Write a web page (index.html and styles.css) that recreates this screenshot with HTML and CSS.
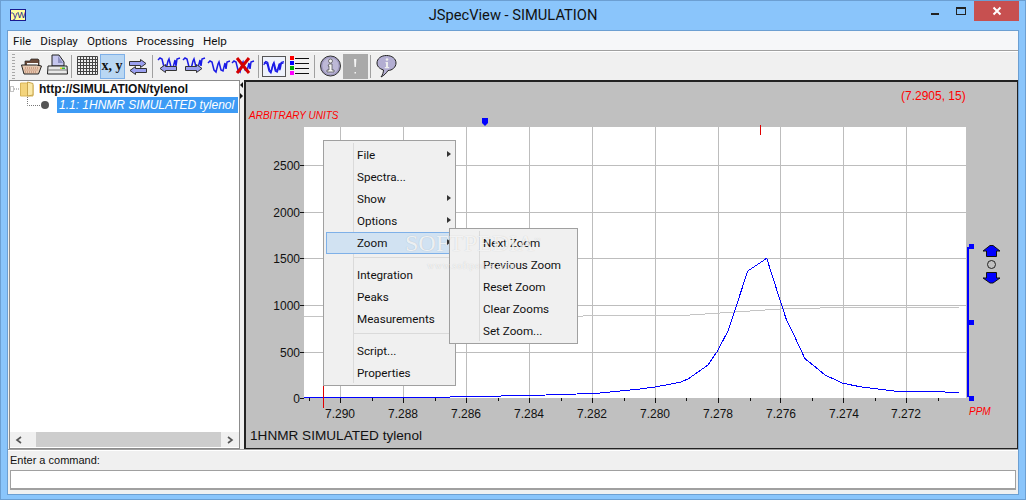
FILE: index.html
```html
<!DOCTYPE html>
<html lang="en">
<head>
    <meta charset="UTF-8">
    <title>JSpecView - SIMULATION</title>
    <link rel="stylesheet" href="styles.css">
</head>
<body>
    <div class="titlebar">
        <div class="app-icon">'yW</div>
        <div class="title">JSpecView - SIMULATION</div>
        <div class="controls">
            <span class="ctl-min"></span>
            <span class="ctl-max"></span>
            <span class="ctl-close">
                <svg width="10" height="10" viewBox="0 0 10 10"><path d="M1.5 1.5l7 7M8.5 1.5l-7 7" stroke="#fff" stroke-width="2"/></svg>
            </span>
        </div>
    </div>

    <div class="content">
        <div class="menubar">
            <span>File</span><span>Display</span><span>Options</span><span>Processing</span><span>Help</span>
        </div>

        <div class="toolbar">
            <div class="grip"></div>
            <!-- file -->
            <div class="tool">
                <svg viewBox="0 0 25 26"><path d="M6 10V8h5l1-2h7l1 1v6H6z" fill="#6b4a3a" stroke="#222" stroke-width=".7"/><path d="M8 10h11v3H8z" fill="#fff"/><path d="M2.5 12h15l5 1-3 8H5z" fill="#e6c8b0" stroke="#222"/><path d="M6 15h13M5.5 17h13M6 19h12" stroke="#b5785f" stroke-dasharray="1 1"/></svg>
            </div>
            <div class="tool">
                <svg viewBox="0 0 25 26"><path d="M8 2h7l5 7v4H8z" fill="#c5c6ee" stroke="#222"/><path d="M14 3l5 7h-5z" fill="#8e90c0"/><path d="M4 13h19l.5 8H3.500z" fill="#e8e8e8" stroke="#222"/><path d="M4 17h19" stroke="#777"/><path d="M16 14.500h2v1.500h-2z" fill="#e8d820"/><path d="M18 14.500h3v1.500h-3z" fill="#3ab53a"/></svg>
            </div>
            <div class="sep"></div>
            <!-- view -->
            <div class="tool">
                <svg viewBox="0 0 25 26"><path d="M2.500 3.500h20v18h-20zM2.500 6.500h20M2.500 9.500h20M2.500 12.500h20M2.500 15.500h20M2.500 18.500h20M5.500 3.500v18M8.500 3.500v18M11.500 3.500v18M14.500 3.500v18M17.500 3.500v18M20.500 3.500v18" fill="#eee" stroke="#444"/></svg>
            </div>
            <div class="tool tool-on xy">x, y</div>
            <div class="tool">
                <svg viewBox="0 0 25 26"><use href="#arrow-r" x="4" y="6"/><use href="#arrow-l" x="4" y="13"/></svg>
            </div>
            <div class="sep"></div>
            <!-- spectrum -->
            <div class="tool">
                <svg viewBox="0 0 25 26"><use href="#spec" x="2" y="3"/><use href="#arrow-l" x="3" y="11"/></svg>
            </div>
            <div class="tool">
                <svg viewBox="0 0 25 26"><use href="#spec" x="2" y="3"/><use href="#arrow-r" x="4" y="11"/></svg>
            </div>
            <div class="tool">
                <svg viewBox="0 0 25 26"><use href="#spec" x="2" y="6"/></svg>
            </div>
            <div class="tool">
                <svg viewBox="0 0 25 26"><use href="#spec" x="1" y="6"/><path d="M6 5l12 15M18 5L6 20" stroke="#d40000" stroke-width="3"/></svg>
            </div>
            <div class="sep"></div>
            <div class="tool tool-box">
                <svg viewBox="0 0 24 21"><use href="#spec" x="0.500" y="4.500"/><use href="#spec" x="1" y="3"/></svg>
            </div>
            <div class="tool">
                <svg viewBox="0 0 25 26"><path d="M3 3h4v4H3z" fill="#f00"/><path d="M3 8h4v4H3z" fill="#00f"/><path d="M3 13h4v4H3z" fill="#0a0"/><path d="M3 18h4v4H3z" fill="#f0f"/><path d="M8 5.500h14M8 10.500h14M8 15.500h14M8 20.500h14" stroke="#111"/></svg>
            </div>
            <div class="sep"></div>
            <!-- info -->
            <div class="tool">
                <svg viewBox="0 0 25 26"><circle cx="12.500" cy="13" r="10" fill="#a09ac0" stroke="#333"/><circle cx="12.500" cy="13" r="8" fill="#bdb8d6"/><circle cx="12.500" cy="8" r="2" fill="#f4f4f4" stroke="#333" stroke-width=".6"/><path d="M11 11h3v6h2v2H9v-2h2v-4h-1z" fill="#f4f4f4" stroke="#333" stroke-width=".6"/></svg>
            </div>
            <div class="tool tool-gray">
                <svg viewBox="0 0 25 26"><path d="M11 6h2.400l-.5 8h-1.400z" fill="#f4f4f4"/><path d="M11.500 19h1.500v1.500h-1.500z" fill="#f4f4f4"/></svg>
            </div>
            <div class="sep"></div>
            <div class="tool">
                <svg viewBox="0 0 25 26"><path d="M12.500 2.500c5.500 0 9.500 3.200 9.500 7.500s-4 7.500-8 7.500c-1.500 2.500-4 5-7 6.500 1.500-2 2.500-4.500 2.500-7C5 15.500 3 13 3 10c0-4.300 4-7.500 9.500-7.500z" fill="#b3aed2" stroke="#222"/><circle cx="13" cy="6.500" r="1.300" fill="#eee"/><path d="M11.500 9h2.500v5h1.200v1.200h-4.400V14h1.200v-3.800h-.5z" fill="#eee"/></svg>
            </div>
        </div>

        <div class="main">
            <div class="tree">
                <div class="tree-body">
                    <div class="tree-row">
                        <svg class="tree-icon" width="29" height="16" viewBox="0 0 29 16">
                            <path d="M.5 5.500h3v5h-3z" fill="none" stroke="#888" stroke-dasharray="1 1"/>
                            <path d="M4 8h6" stroke="#888" stroke-dasharray="1 1"/>
                            <path d="M10.500 2h9l3.500 2v11h-12.500z" fill="#f3d47c" stroke="#d8b65a"/>
                            <path d="M17.500 1v14l5.500-1V2.500z" fill="#fbe9a8" stroke="#c9a64e"/>
                        </svg>
                        <b class="tree-root">http://SIMULATION/tylenol</b>
                    </div>
                    <div class="tree-row">
                        <svg class="tree-icon" width="47" height="16" viewBox="0 0 47 16">
                            <path d="M17.500 0v8.500H31" fill="none" stroke="#777" stroke-dasharray="1 1"/>
                            <circle cx="35" cy="8" r="4" fill="#555"/>
                        </svg>
                        <span class="tree-selected">1.1: 1HNMR SIMULATED tylenol</span>
                    </div>
                </div>
                <div class="hscroll">
                    <span class="scroll-arrow arrow-left">
                        <svg width="8" height="8" viewBox="0 0 8 8"><path d="M6 1L2 4l4 3" fill="none" stroke="#555" stroke-width="1.600"/></svg>
                    </span>
                    <span class="scroll-thumb"></span>
                    <span class="scroll-arrow arrow-right">
                        <svg width="8" height="8" viewBox="0 0 8 8"><path d="M2 1l4 3-4 3" fill="none" stroke="#555" stroke-width="1.600"/></svg>
                    </span>
                </div>
            </div>

            <div class="divider">
                <span class="nub-left"></span>
                <span class="nub-right"></span>
            </div>

            <div class="plot">
                <!-- viewBox uses window coordinates -->
                <svg class="plot-svg" width="771" height="366" viewBox="246 82 771 366">
                    <rect x="304" y="127" width="662" height="271" fill="#fff"/>
                    <g shape-rendering="crispEdges">
                        <path d="M340.500 127v271M403.500 127v271M466.500 127v271M529.500 127v271M592.500 127v271M655.500 127v271M718.500 127v271M780.500 127v271M843.500 127v271M906.500 127v271" stroke="#bdbdbd" fill="none"/>
                        <path d="M304 165.500h662M304 212.500h662M304 258.500h662M304 305.500h662M304 352.500h662" stroke="#bdbdbd" fill="none"/>
                        <path d="M304 316.500L583 316L680 315.700L780 309L833 307.700L958.700 307.300" stroke="#c4c4c4" fill="none"/>
                        <path d="M304 397.500L450 397L527 395.500L565 394.500L600 393L640 389L655 387L680 382.300L688 379L697 372.700L708 365L717 351.700L728 331L735 310L747.700 271L766.700 258.300L780 300L786.700 320.700L793 333L805 358.700L815 366.700L825 375L843 383.300L860 386.700L880 389.300L896.700 391.300L930 391.700L958.700 392.300" stroke="#00f" fill="none"/>
                        <path d="M340.500 398v5M403.500 398v5M466.500 398v5M529.500 398v5M592.500 398v5M655.500 398v5M718.500 398v5M780.500 398v5M843.500 398v5M906.500 398v5" stroke="#111"/>
                        <path d="M309.500 398v3M372.500 398v3M435.500 398v3M498.500 398v3M561.500 398v3M624.500 398v3M686.500 398v3M750.500 398v3M812.500 398v3M875.500 398v3M938.500 398v3" stroke="#111"/>
                        <path d="M300 165.500h4M300 212.500h4M300 258.500h4M300 305.500h4M300 352.500h4M300 398.500h4" stroke="#111"/>
                        <path d="M323.500 386v22M760.500 125v10" stroke="#e00000"/>
                        <path d="M967 247h2v150h-2z" fill="#00f"/>
                        <path d="M969 244h5v5h-5zM969 320h5v5h-5zM969 396h5v5h-5z" fill="#00f"/>
                    </g>
                    <path d="M482 118h6v5l-3 3-3-3z" fill="#00f"/>
                    <g class="ticks-y">
                        <text x="300" y="170">2500</text>
                        <text x="300" y="217">2000</text>
                        <text x="300" y="263">1500</text>
                        <text x="300" y="310">1000</text>
                        <text x="300" y="357">500</text>
                        <text x="300" y="403">0</text>
                    </g>
                    <g class="ticks-x">
                        <text x="340" y="418">7.290</text>
                        <text x="403" y="418">7.288</text>
                        <text x="466" y="418">7.286</text>
                        <text x="529" y="418">7.284</text>
                        <text x="592" y="418">7.282</text>
                        <text x="655" y="418">7.280</text>
                        <text x="718" y="418">7.278</text>
                        <text x="781" y="418">7.276</text>
                        <text x="844" y="418">7.274</text>
                        <text x="906" y="418">7.272</text>
                    </g>
                    <text class="unit" x="249" y="118.500">ARBITRARY UNITS</text>
                    <text class="unit" x="969" y="414.500">PPM</text>
                    <text class="coord" x="901" y="100">(7.2905, 15)</text>
                    <text class="plot-title" x="250" y="440">1HNMR SIMULATED tylenol</text>
                    <!-- y zoom arrows -->
                    <path d="M990 245.500h3l7 5.500h-3.500v5.500h-10v-5.500h-3.500z" fill="#00f" stroke="#111"/>
                    <circle cx="991.500" cy="264.500" r="4" fill="none" stroke="#222"/>
                    <path d="M986.500 272.500h10v5.500h3.500l-7 5h-3l-7-5h3.500z" fill="#00f" stroke="#111"/>
                </svg>
            </div>
        </div>

        <div class="command">
            <div class="command-label">Enter a command:</div>
            <input class="command-input" type="text">
        </div>
    </div>

    <!-- popup menus -->
    <div class="menu menu-main">
        <div class="item sub">File</div>
        <div class="item">Spectra...</div>
        <div class="item sub">Show</div>
        <div class="item sub">Options</div>
        <div class="item sub active">Zoom</div>
        <div class="menu-sep"></div>
        <div class="item">Integration</div>
        <div class="item">Peaks</div>
        <div class="item">Measurements</div>
        <div class="menu-sep"></div>
        <div class="item">Script...</div>
        <div class="item">Properties</div>
    </div>
    <div class="menu menu-zoom">
        <div class="item">Next Zoom</div>
        <div class="item">Previous Zoom</div>
        <div class="item">Reset Zoom</div>
        <div class="item">Clear Zooms</div>
        <div class="item">Set Zoom...</div>
    </div>

    <div class="watermark">SOFTPEDIA<sup>™</sup></div>
    <div class="watermark-url">www.softpedia.com</div>

    <svg class="defs" width="0" height="0">
        <symbol id="spec" width="22" height="14" viewBox="0 0 22 14" overflow="visible">
            <path d="M0 4L2 2L4 3L6 11L8 13L10 5L11 3L13 11L15 12L17 4L18 10L19 3L22 2" fill="none" stroke="#1a1ae6" stroke-width="1.500"/>
        </symbol>
        <symbol id="arrow-r" width="18" height="9" viewBox="0 0 18 9" overflow="visible">
            <path d="M.5 2.500h11V.5l5.500 4-5.500 4v-2H.5z" fill="#9a9ff0" stroke="#333"/>
        </symbol>
        <symbol id="arrow-l" width="18" height="9" viewBox="0 0 18 9" overflow="visible">
            <path d="M17.500 2.500h-11V.5L1 4.500l5.500 4v-2h11z" fill="#9a9ff0" stroke="#333"/>
        </symbol>
    </svg>
</body>
</html>
```

FILE: styles.css
```css
* {
    box-sizing: border-box;
}
html, body {
    margin: 0;
    padding: 0;
}
body {
    position: relative;
    width: 1026px;
    height: 500px;
    overflow: hidden;
    background-color: #8ac5fb;
    border: 1px solid #6c9fd2;
    font-family: Roboto, "Noto Sans", sans-serif;
    font-size: 11.650px;
    color: #111;
}
.defs {
    position: absolute;
}

/* title bar */
.titlebar {
    display: grid;
    grid-template-columns: 1fr auto 1fr;
    height: 29px;
}
.app-icon {
    width: 16px;
    height: 12px;
    margin: 8px 0 0 9px;
    background-color: #ffffa0;
    border: 1px solid #1a1a90;
    color: #1a1a90;
    font: 9px/10px "Liberation Sans", sans-serif;
    text-align: center;
    overflow: hidden;
}
.title {
    font-size: 14.700px;
    line-height: 29px;
}
.controls {
    display: flex;
    justify-content: flex-end;
    padding-right: 6px;
}
.ctl-min {
    width: 8px;
    height: 2px;
    margin: 12px 17px 0 0;
    background-color: #222;
}
.ctl-max {
    width: 10px;
    height: 8px;
    margin: 6px 8px 0 0;
    border: 1px solid #222;
    border-top-width: 2px;
}
.ctl-close {
    display: flex;
    align-items: center;
    justify-content: center;
    width: 45px;
    height: 20px;
    background-color: #c75050;
}

/* window content */
.content {
    display: flex;
    flex-direction: column;
    height: 465px;
    margin: 0 6px 0 6px;
    background-color: #f0f0f0;
    border: 1px solid #6c9fd2;
}
.menubar {
    display: flex;
    gap: 9px;
    height: 20px;
    padding-left: 5px;
    line-height: 21px;
    background-color: #f6f7f9;
    border-bottom: 1px solid #a0a0a0;
}
.toolbar {
    display: flex;
    align-items: center;
    height: 29px;
    padding-left: 4px;
    border-top: 1px solid #fff;
}
.grip {
    width: 3px;
    height: 25px;
    margin-right: 3.500px;
    background-image: linear-gradient(#a8a8a8 50%, transparent 50%);
    background-size: 3px 3px;
}
.tool {
    display: flex;
    align-items: center;
    justify-content: center;
    flex: none;
    width: 25px;
    height: 26px;
}
.tool svg {
    display: block;
    width: 25px;
    height: 26px;
}
.tool-on {
    height: 25px;
    background-color: #b9d7f3;
    border: 1px solid #7eb0e8;
}
.tool-box svg {
    height: 21px;
    width: 24px;
    background-color: #eef2fb;
    border: 1px solid #555;
}
.tool-gray {
    height: 25px;
    background-color: #a9a9a9;
}
.xy {
    font: bold 14px "Liberation Serif", serif;
    color: #111;
}
.sep {
    flex: none;
    width: 1px;
    height: 23px;
    margin: 0 2.500px;
    background-color: #a0a0a0;
}

/* split pane */
.main {
    display: flex;
    height: 369px;
    padding-left: 1px;
}
.tree {
    display: flex;
    flex-direction: column;
    width: 231px;
    background-color: #fff;
    border: 1px solid #8c8c8c;
}
.tree-body {
    flex: 1;
}
.tree-row {
    display: flex;
    align-items: center;
    height: 16px;
    white-space: nowrap;
}
.tree-icon {
    flex: none;
}
.tree-root {
    font: bold 12px "Liberation Sans", sans-serif;
}
.tree-selected {
    flex: 1;
    margin-right: 1px;
    padding-left: 2px;
    background-color: #3d9bf5;
    color: #fff;
    font: italic 12px/16px "Liberation Sans", sans-serif;
}
.hscroll {
    display: flex;
    height: 15px;
    margin-bottom: 1px;
    background-color: #f0f0f0;
}
.scroll-arrow {
    display: flex;
    align-items: center;
    justify-content: center;
    flex: none;
}
.arrow-left {
    width: 26px;
    padding-right: 9px;
}
.arrow-right {
    width: 18px;
}
.scroll-thumb {
    flex: 1;
    background-color: #cdcdcd;
}
.divider {
    display: flex;
    flex-direction: column;
    flex: none;
    width: 4px;
    padding: 2px 0 0 0;
    gap: 5px;
}
.nub-left, .nub-right {
    width: 0;
    height: 0;
    border-top: 3.500px solid transparent;
    border-bottom: 3.500px solid transparent;
}
.nub-left {
    border-right: 3px solid #111;
}
.nub-right {
    border-left: 3px solid #111;
}

/* plot */
.plot {
    flex: 1;
    background-color: #c0c0c0;
    border: 1px solid #222;
    border-width: 2px 1px 1px 2px;
    overflow: hidden;
}
.plot-svg {
    display: block;
}
.plot-svg text {
    font-family: "Liberation Sans", sans-serif;
}
.ticks-y text {
    font-size: 12px;
    text-anchor: end;
    fill: #111;
}
.ticks-x text {
    font-size: 12px;
    text-anchor: middle;
    fill: #111;
}
.unit {
    font-size: 10px;
    font-style: italic;
    fill: #f00;
}
.coord {
    font-size: 12px;
    fill: #f00;
}
.plot-title {
    font-size: 13.600px;
    fill: #111;
}

/* command box */
.command {
    flex: 1;
    border-top: 1px solid #a0a0a0;
    box-shadow: inset 0 1px 0 #fff;
}
.command-label {
    height: 20px;
    padding-left: 2px;
    font: 11px/20px "Liberation Sans", sans-serif;
}
.command-input {
    display: block;
    width: 1006px;
    height: 20px;
    margin: 0 0 0 2px;
    padding: 0;
    background-color: #fff;
    border: 1px solid #a0a0a0;
    border-width: 1px 1px 2px 1px;
    outline: none;
}

/* popup menus */
.menu {
    position: absolute;
    background-color: #f0f0f0;
    border: 1px solid #a0a0a0;
    padding: 3px 0 1px;
}
.menu::before {
    content: "";
    position: absolute;
    top: 2px;
    bottom: 2px;
    left: 29px;
    width: 1px;
    background-color: #dadada;
}
.menu-main {
    left: 322px;
    top: 139px;
    width: 133px;
    height: 246px;
}
.menu-zoom {
    left: 448px;
    top: 227px;
    width: 129px;
    height: 116px;
}
.item {
    position: relative;
    height: 22px;
    margin: 0 2px;
    padding-left: 31px;
    line-height: 23px;
    white-space: nowrap;
}
.active {
    background-color: #d1e2f2;
    box-shadow: inset 0 0 0 1px #7eb0e8;
}
.sub::after {
    content: "";
    position: absolute;
    right: 2px;
    top: 7px;
    border-left: 4px solid #333;
    border-top: 3.500px solid transparent;
    border-bottom: 3.500px solid transparent;
}
.menu-sep {
    height: 1px;
    margin: 3px 2px 6px 30px;
    background-color: #dadada;
}

/* site watermark */
.watermark, .watermark-url {
    position: absolute;
    color: rgba(255, 255, 255, 0.8);
    font-family: "Liberation Serif", serif;
    text-shadow: 0 0 1px rgba(0, 0, 0, 0.2);
    white-space: nowrap;
}
.watermark {
    left: 404px;
    top: 229px;
    font-size: 24px;
}
.watermark sup {
    font-size: 6px;
}
.watermark-url {
    left: 426px;
    top: 259px;
    font-size: 10px;
    letter-spacing: 0.500px;
}
```
